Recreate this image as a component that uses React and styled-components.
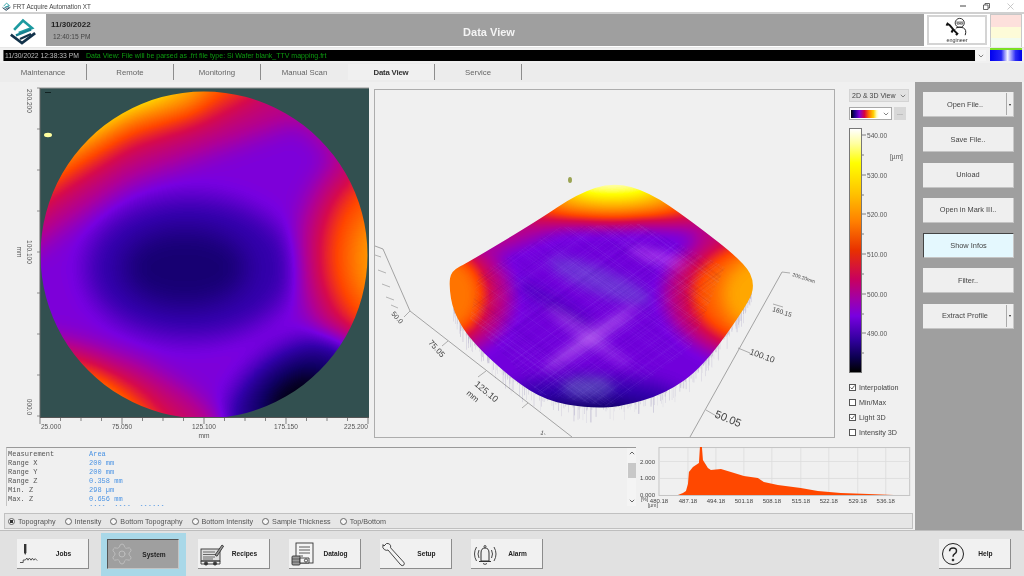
import React from 'react'
import styled, { createGlobalStyle } from 'styled-components'
import { Settings } from 'lucide-react'

const GlobalStyle = createGlobalStyle`
    html, body { margin: 0; padding: 0; background: #f0f0f0; }
    * { box-sizing: border-box; }
`;

const UI_FONT = `"Liberation Sans", Arial, sans-serif`;
const COLORMAP = "0 .06 .2 .47 .69 .84 1 1 1 1 1|0 0 0 0 0 .04 .27 .51 .75 1 1|0 .39 .67 .88 .59 .3 0 0 0 0 1";

const Page = styled.div`
    width: 1024px;
    height: 576px;
    overflow: hidden;
    display: flex;
    flex-direction: column;
    background: #f0f0f0;
    font-family: ${UI_FONT};
    color: #333;
    filter: blur(0.45px);
`;

const TitleBar = styled.div`
    height: 12px;
    background: #fff;
    display: flex;
    align-items: center;
    padding: 0 6px 0 2px;
    gap: 2px;
    font-size: 6.3px;
    color: #444;
`;

const TitleText = styled.span`
    flex: 1;
`;

const WindowControls = styled.div`
    display: flex;
    align-items: center;
    gap: 17px;
    margin-right: 4px;
`;

const Header = styled.div`
    height: 36px;
    display: flex;
    background: #fff;
    border-top: 2px solid #d0d0d0;
    border-bottom: 1px solid #e8e8e8;
`;

const LogoBox = styled.div`
    width: 46px;
    display: flex;
    align-items: center;
    justify-content: center;
`;

const HeaderPanel = styled.div`
    flex: 1;
    background: #9f9f9f;
    display: flex;
    align-items: center;
    margin-bottom: 1px;
`;

const DateBlock = styled.div`
    width: 120px;
    padding-left: 5px;
    display: flex;
    flex-direction: column;
    gap: 4px;
`;

const DateText = styled.div`
    font-size: 8px;
    font-weight: 700;
    color: #222;
`;

const TimeText = styled.div`
    font-size: 6.6px;
    color: #444;
    padding-left: 2px;
`;

const ViewTitle = styled.div`
    flex: 1;
    text-align: center;
    font-size: 11px;
    font-weight: 700;
    color: #f4f4f4;
    padding: 3px 112px 0 0;
`;

const UserBox = styled.div`
    width: 60px;
    margin: 1px 3px 2px 3px;
    background: #fff;
    border: 2px solid #d4d4d4;
    display: flex;
    flex-direction: column;
    align-items: center;
    font-size: 5.4px;
    color: #333;
    line-height: 6px;
`;

const Lights = styled.div`
    width: 32px;
    margin-right: 2px;
    display: flex;
    flex-direction: column;
    border: 1px solid #c8c8c8;
    border-bottom: 0;
`;

const Light = styled.div`
    height: ${p => p.$h}px;
    background: ${p => p.$c};
`;

const StatusRow = styled.div`
    height: 15px;
    padding: 2px 2px 2px 3px;
    display: flex;
    gap: 1px;
    background: #f0f0f0;
`;

const StatusLog = styled.div`
    flex: 1;
    height: 11px;
    background: #000;
    border-left: 1px solid #666;
    display: flex;
    align-items: center;
    gap: 7px;
    padding-left: 1px;
    font-size: 6.8px;
    white-space: nowrap;
`;

const StatusStamp = styled.span`
    color: #bdbdbd;
`;

const StatusMessage = styled.span`
    color: #0c9a10;
    font-size: 7px;
`;

const StatusDrop = styled.div`
    width: 10px;
    height: 11px;
    background: #f4f4f4;
    display: flex;
    align-items: center;
    justify-content: center;
`;

const StatusEnd = styled.div`
    width: 32px;
    height: 13px;
    margin: -2px 0 0 3px;
    border-top: 2px solid #7ce024;
    background: linear-gradient(90deg, #0000f0 0%, #2424f4 35%, #f4f4ff 55%, #2a2af4 80%, #0000e8 100%);
`;

const TabRow = styled.div`
    height: 19px;
    padding-top: 1px;
    display: flex;
    background: #ececec;
`;

const Tab = styled.div`
    width: 87px;
    display: flex;
    align-items: center;
    justify-content: center;
    font-size: 7.8px;
    font-weight: ${p => (p.$active ? 700 : 400)};
    color: ${p => (p.$active ? '#333' : '#666')};
    background: ${p => (p.$active ? '#f0f0f0' : 'transparent')};
    border-right: ${p => (p.$plain ? '0' : '1px solid #8d8d8d')};
    margin-bottom: 2px;
    letter-spacing: ${p => (p.$active ? '-0.2px' : '0')};
`;

const Main = styled.div`
    height: 448px;
    display: flex;
`;

const Content = styled.div`
    width: 915px;
    display: flex;
    flex-direction: column;
`;

const ViewerRow = styled.div`
    height: 360px;
    display: flex;
`;

const WaferPlot = styled.svg`
    width: 372px;
    height: 360px;
    flex: none;
    display: block;
`;

const SurfaceBox = styled.div`
    width: 461px;
    height: 349px;
    margin: 7px 0 0 2px;
    border: 1px solid #adadad;
    background: #f0f0f0;
    overflow: hidden;
    flex: none;
`;

const Surface = styled.svg`
    display: block;
    width: 459px;
    height: 347px;
`;

const Controls = styled.div`
    width: 60px;
    margin: 7px 0 0 14px;
    display: flex;
    flex-direction: column;
`;

const ViewSelect = styled.div`
    width: 60px;
    height: 13px;
    background: #e2e2e2;
    border: 1px solid #d4d4d4;
    font-size: 7px;
    color: #444;
    display: flex;
    align-items: center;
    justify-content: space-between;
    padding: 0 2px;
`;

const MapRow = styled.div`
    margin-top: 5px;
    display: flex;
    gap: 2px;
`;

const MapSelect = styled.div`
    width: 43px;
    height: 13px;
    background: #fff;
    border: 1px solid #a8a8a8;
    display: flex;
    align-items: center;
    padding: 0 2px 0 1px;
    justify-content: space-between;
`;

const MapSwatch = styled.div`
    width: 28px;
    height: 8px;
    background: linear-gradient(90deg, #000 0%, #140080 12%, #8000d8 30%, #d80040 48%, #ff7000 64%, #ffd000 80%, #ffffc0 92%, #fff 100%);
`;

const MapMore = styled.div`
    width: 12px;
    height: 13px;
    background: #d8d8d8;
    color: #777;
    font-size: 7px;
    text-align: center;
    line-height: 11px;
`;

const ScaleRow = styled.div`
    margin-top: 8px;
    height: 245px;
    display: flex;
`;

const ColorBar = styled.div`
    width: 13px;
    height: 245px;
    border: 1px solid #777;
    background: linear-gradient(180deg, #fff 0%, #ffffa0 6%, #ffff00 14%, #ffc000 27%, #ff8000 38%, #e83000 50%, #c80060 62%, #a000a8 70%, #7800e0 77%, #30009c 87%, #0c0050 94%, #000 100%);
`;

const ScaleTicks = styled.svg`
    width: 47px;
    height: 245px;
    display: block;
`;

const CheckList = styled.div`
    margin-top: 9px;
    display: flex;
    flex-direction: column;
    gap: 5.1px;
`;

const CheckRow = styled.div`
    height: 10px;
    display: flex;
    align-items: center;
    gap: 3px;
    font-size: 7.2px;
    color: #444;
    white-space: nowrap;
`;

const CheckBox = styled.span`
    width: 7px;
    height: 7px;
    border: 1px solid #555;
    background: #fff;
    display: flex;
    align-items: center;
    justify-content: center;
`;

const InfoRow = styled.div`
    height: 70px;
    padding: 5px 0 0 6px;
    display: flex;
`;

const InfoPanel = styled.div`
    width: 631px;
    height: 59px;
    border-top: 1px solid #999;
    border-left: 1px solid #c4c4c4;
    display: flex;
    overflow: hidden;
`;

const InfoLines = styled.div`
    flex: 1;
    padding: 2px 0 0 1px;
    font-family: "Liberation Mono", monospace;
    font-size: 7px;
    line-height: 9px;
    overflow: hidden;
`;

const InfoLine = styled.div`
    display: flex;
    white-space: pre;
    height: 9px;
`;

const InfoKey = styled.span`
    width: 81px;
    color: #555;
`;

const InfoValue = styled.span`
    color: #4c94e4;
`;

const ScrollBar = styled.div`
    width: 9px;
    display: flex;
    flex-direction: column;
    align-items: center;
    padding: 3px 0;
    background: #f4f4f4;
`;

const ScrollThumb = styled.div`
    width: 8px;
    height: 15px;
    background: #c8c8c8;
    margin: 8px 0 auto;
`;

const Histogram = styled.svg`
    width: 277px;
    height: 62px;
    margin-left: 2px;
    display: block;
`;

const RadioBar = styled.div`
    height: 16px;
    margin: 1px 2px 0 4px;
    background: #e6e6e6;
    border: 1px solid #c0c0c0;
    display: flex;
    align-items: center;
    gap: 9px;
    padding-left: 3px;
    font-size: 7.2px;
    color: #555;
`;

const RadioItem = styled.label`
    display: flex;
    align-items: center;
    gap: 3px;
    white-space: nowrap;
`;

const RadioDot = styled.span`
    width: 7px;
    height: 7px;
    border-radius: 50%;
    border: 1px solid #666;
    background: ${p => (p.$on ? 'radial-gradient(circle, #333 0 45%, #f4f4f4 55%)' : '#f8f8f8')};
`;

const Sidebar = styled.div`
    width: 107px;
    height: 448px;
    background: #9f9f9f;
    padding: 10px 0 0 8px;
    display: flex;
    flex-direction: column;
    gap: 10.3px;
`;

const SideButton = styled.div`
    width: 91px;
    height: 25px;
    flex: none;
    display: flex;
    align-items: center;
    justify-content: center;
    font-size: 7.4px;
    color: #444;
    background: ${p => (p.$active ? '#e4f8fe' : '#efefef')};
    border-right: 1px solid #c8c8c8;
    border-bottom: 1px solid #c4c4c4;
    border-top: ${p => (p.$active ? '1px solid #444' : '0')};
    border-left: ${p => (p.$active ? '1px solid #444' : '0')};
    position: relative;
    padding-right: ${p => (p.$split ? '6px' : '0')};
`;

const SplitArrow = styled.span`
    position: absolute;
    right: 0;
    top: 1px;
    bottom: 1px;
    width: 7px;
    border-left: 1px solid #aaa;
    display: flex;
    align-items: center;
    justify-content: center;
    &::after {
        content: '';
        border: 1.6px solid transparent;
        border-top: 2px solid #222;
        margin-top: 2px;
    }
`;

const Nav = styled.div`
    flex: 1;
    display: flex;
    gap: 19px;
    padding: 0 13px 0 17px;
    background: #e1e1e1;
    border-top: 1px solid #bdbdbd;
`;

const NavSlot = styled.div`
    display: flex;
    align-items: flex-start;
    padding: ${p => (p.$active ? '6px 7px 0 6px' : '8px 0 0')};
    margin: ${p => (p.$active ? '2px -7px 0' : '0')};
    background: ${p => (p.$active ? '#a9d8e8' : 'transparent')};
    margin-left: ${p => (p.$end ? 'auto' : undefined)};
`;

const NavButton = styled.div`
    width: 72px;
    height: 30px;
    display: flex;
    align-items: center;
    background: ${p => (p.$active ? '#9f9f9f' : '#f1f1f1')};
    border-right: 1px solid ${p => (p.$active ? '#c4c4c4' : '#8c8c8c')};
    border-bottom: 1px solid ${p => (p.$active ? '#c4c4c4' : '#8c8c8c')};
    border-top: ${p => (p.$active ? '1px solid #555' : '0')};
    border-left: ${p => (p.$active ? '1px solid #555' : '0')};
`;

const NavIcon = styled.svg`
    width: 26px;
    height: 26px;
    margin-left: 1px;
    flex: none;
`;

const NavLabel = styled.span`
    flex: 1;
    text-align: center;
    font-size: 6.6px;
    font-weight: 700;
    color: #222;
    padding-right: 5px;
`;

// gray value that the colormap filter turns into a height colour
const g = (v) => {
    const c = Math.round(v * 255);
    return `rgb(${c},${c},${c})`;
};

const rng = (seed) => {
    let s = seed;
    return () => {
        s = (s * 16807) % 2147483647;
        return s / 2147483647;
    };
};

const HeightFilter = ({ id, x, y, w, h, blur }) => {
    const [r, gr, b] = COLORMAP.split('|');
    return (
        <filter id={id} filterUnits="userSpaceOnUse" x={x} y={y} width={w} height={h} colorInterpolationFilters="sRGB">
            <feGaussianBlur stdDeviation={blur} />
            <feComponentTransfer>
                <feFuncR type="table" tableValues={r} />
                <feFuncG type="table" tableValues={gr} />
                <feFuncB type="table" tableValues={b} />
            </feComponentTransfer>
        </filter>
    );
};

const LABEL = { fontFamily: UI_FONT, fill: '#555' };

const WaferMap = () => {
    const bottomTicks = [40, 60.5, 81, 101.5, 122, 142.5, 163, 183.5, 204, 224.5, 245, 265.5, 286, 306.5, 327, 347.5, 368];
    const sideTicks = [88, 129, 170, 211, 252, 293, 334, 375, 416];
    return (
        <WaferPlot viewBox="0 82 372 360">
            <defs>
                <HeightFilter id="waferField" x={-40} y={20} w={480} h={480} blur={13} />
                <clipPath id="waferClip"><path d="M204 91.5a163.5 163.5 0 1 1-.01 0z" /></clipPath>
                <clipPath id="plotClip"><rect x="40" y="88" width="329" height="329" /></clipPath>
            </defs>
            <rect x="40" y="88" width="329" height="329" fill="#325050" />
            <g clipPath="url(#plotClip)">
                <g clipPath="url(#waferClip)">
                    <g filter="url(#waferField)">
                        <rect x="-40" y="20" width="480" height="480" fill={g(.31)} />
                        <ellipse cx="190" cy="268" rx="105" ry="72" fill={g(.2)} />
                        <ellipse cx="185" cy="268" rx="62" ry="38" fill={g(.12)} />
                        <path d="M0 275L60 228 130 180 240 140 300 118 330 60 0 40z" fill={g(.44)} />
                        <path d="M300 118L350 170 380 215 420 200 400 60 320 60z" fill={g(.44)} />
                        <path d="M0 235L60 190 130 145 200 122 260 90 260 40 0 40z" fill={g(.6)} />
                        <path d="M0 200L70 155 130 120 190 104 225 70 0 40z" fill={g(.8)} />
                        <path d="M0 178L70 132 125 102 160 90 170 60 0 40z" fill={g(1)} />
                        <ellipse cx="400" cy="255" rx="100" ry="120" fill={g(.46)} />
                        <ellipse cx="390" cy="255" rx="65" ry="85" fill={g(.62)} />
                        <ellipse cx="390" cy="258" rx="36" ry="50" fill={g(.75)} />
                        <path d="M30 335L80 345 140 365 190 395 235 440 0 460z" fill={g(.46)} />
                        <path d="M30 350L90 365 140 395 180 440 0 460z" fill={g(.62)} />
                        <path d="M50 385L100 390 150 440 40 460z" fill={g(.84)} />
                        <ellipse cx="295" cy="395" rx="75" ry="46" transform="rotate(-35 295 395)" fill={g(.14)} />
                        <ellipse cx="298" cy="398" rx="38" ry="24" transform="rotate(-35 298 398)" fill={g(.01)} />
                    </g>
                </g>
            </g>
            <g fill="#ffffa0">
                <ellipse cx="48" cy="135" rx="4" ry="2.2" />
            </g>
            <rect x="45" y="92" width="6" height="1" fill="#122" />
            <line x1="40" y1="88" x2="369" y2="88" stroke="#999" />
            <line x1="40" y1="88" x2="40" y2="418" stroke="#666" />
            <line x1="40" y1="417.5" x2="369" y2="417.5" stroke="#555" />
            {bottomTicks.map((x, i) => (
                <line key={x} x1={x} x2={x} y1="418" y2={i % 4 === 0 ? 424 : 421} stroke="#555" strokeWidth=".7" />
            ))}
            {sideTicks.map((y) => (
                <line key={y} x1="37" x2="40" y1={y} y2={y} stroke="#666" strokeWidth=".7" />
            ))}
            <g {...LABEL} fontSize="6.6" textAnchor="middle">
                <text x="51" y="429">25.000</text>
                <text x="122" y="429">75.050</text>
                <text x="204" y="429">125.100</text>
                <text x="286" y="429">175.150</text>
                <text x="356" y="429">225.200</text>
                <text x="204" y="438">mm</text>
                <text transform="translate(27 101) rotate(90)">200.200</text>
                <text transform="translate(27 252) rotate(90)">100.100</text>
                <text transform="translate(27 407) rotate(90)">000.0</text>
                <text transform="translate(17 252) rotate(90)">mm</text>
            </g>
        </WaferPlot>
    );
};

const OUTLINE = [[449, 287], [451, 272], [467, 264], [537, 222], [577, 195], [613, 183], [649, 193], [690, 221], [745, 264], [755, 285], [748, 305], [703, 368], [665, 395], [620, 408], [587, 409], [547, 402], [513, 381], [470, 341], [453, 312]];

// rounded closed path through the midpoints of the outline
const smoothPath = (pts) => {
    const mid = (a, b) => [(a[0] + b[0]) / 2, (a[1] + b[1]) / 2];
    const start = mid(pts[pts.length - 1], pts[0]);
    let d = `M${start[0]} ${start[1]}`;
    pts.forEach((p, i) => {
        const m = mid(p, pts[(i + 1) % pts.length]);
        d += `Q${p[0]} ${p[1]} ${m[0]} ${m[1]}`;
    });
    return d + 'Z';
};

const OUTLINE_D = smoothPath(OUTLINE);
const LOWER_EDGE = [[752, 290], [747, 303], [703, 367], [663, 393], [620, 406], [587, 407], [547, 400], [513, 380], [470, 340], [453, 310]];

const makeSpikes = () => {
    const rand = rng(4711);
    const out = [];
    for (let s = 0; s < LOWER_EDGE.length - 1; s++) {
        const [ax, ay] = LOWER_EDGE[s];
        const [bx, by] = LOWER_EDGE[s + 1];
        const n = Math.round(Math.hypot(bx - ax, by - ay) * 1.2);
        for (let i = 0; i < n; i++) {
            const t = i / n;
            const x = ax + (bx - ax) * t;
            const y = ay + (by - ay) * t;
            const r = rand();
            out.push({ x, y: y - 2, len: 2 + r * r * r * 18, o: 0.12 + rand() * 0.4 });
        }
    }
    return out;
};

const makeHatch = () => {
    const rand = rng(99);
    const out = [];
    for (let set = 0; set < 2; set++) {
        const dy = set === 0 ? -0.72 : 0.72;
        for (let i = -170; i < 170; i++) {
            const cy = 310 + i * 1.2;
            out.push({
                x1: 380, y1: cy - 220 * dy,
                x2: 820, y2: cy + 220 * dy,
                o: rand() * rand() * 0.3,
                c: rand() > 0.7 ? '#2a0a90' : '#b8b0ff',
            });
        }
    }
    return out;
};

const SPIKES = makeSpikes();
const HATCH = makeHatch();

const SurfaceView = () => (
    <Surface viewBox="375 91 459 347">
        <defs>
            <HeightFilter id="surfaceField" x={340} y={100} w={500} h={360} blur={9} />
            <clipPath id="surfaceClip"><path d={OUTLINE_D} /></clipPath>
            <clipPath id="hatchClip"><path d="M478 275L560 228 640 225 725 268 690 350 610 408 540 395 470 320z" /></clipPath>
            <filter id="soft"><feGaussianBlur stdDeviation="6" /></filter>
        </defs>
        <g stroke="#9a9a9a" strokeWidth=".9" fill="none">
            <path d="M375 247L383 250 410 312 572 438" />
            <path d="M782 273L690 438" />
            <path d="M782 273L790 274M773 305L783 308M738 349L750 354M706 411L718 418M410 312L404 318M448 342L442 347M486 372L478 378M528 404L522 409" strokeWidth=".8" />
            <path d="M375 256L381 258M378 271L386 274M382 285L390 288M386 298L394 301M391 306L398 309" strokeWidth=".7" />
        </g>
        <g fill="#7f8b20" opacity=".75"><ellipse cx="570" cy="181" rx="2" ry="3" /></g>
        <g stroke="#3a2a80" strokeWidth=".35">
            {SPIKES.map((s, i) => (
                <line key={i} x1={s.x} y1={s.y} x2={s.x} y2={s.y + s.len} opacity={s.o} />
            ))}
        </g>
        <g clipPath="url(#surfaceClip)">
            <g filter="url(#surfaceField)">
                <rect x="340" y="100" width="500" height="360" fill={g(.29)} />
                <path d="M490 255L560 228 620 220 690 232 770 295 800 150 440 150z" fill={g(.43)} />
                <ellipse cx="612" cy="195" rx="115" ry="30" fill={g(.6)} />
                <ellipse cx="612" cy="187" rx="80" ry="28" fill={g(.78)} />
                <ellipse cx="612" cy="180" rx="52" ry="18" fill={g(.98)} />
                <ellipse cx="437" cy="298" rx="74" ry="60" fill={g(.44)} />
                <ellipse cx="437" cy="296" rx="48" ry="46" fill={g(.68)} />
                <ellipse cx="775" cy="295" rx="110" ry="70" fill={g(.45)} />
                <ellipse cx="775" cy="295" rx="84" ry="56" fill={g(.64)} />
                <ellipse cx="775" cy="295" rx="54" ry="42" fill={g(.76)} />
                <ellipse cx="590" cy="402" rx="95" ry="24" fill={g(.2)} />
                <ellipse cx="590" cy="418" rx="70" ry="14" fill={g(.08)} />
            </g>
            <g filter="url(#soft)">
                <ellipse cx="600" cy="282" rx="55" ry="13" transform="rotate(22 600 282)" fill="#6a70d0" opacity=".45" />
                <ellipse cx="555" cy="305" rx="45" ry="7" transform="rotate(30 555 305)" fill="#2400a0" opacity=".4" />
                <ellipse cx="590" cy="340" rx="55" ry="6" transform="rotate(-34 590 340)" fill="#f0b0ff" opacity=".45" />
                <ellipse cx="590" cy="340" rx="50" ry="5" transform="rotate(34 590 340)" fill="#e8a0ff" opacity=".3" />
                <ellipse cx="657" cy="258" rx="30" ry="5" transform="rotate(16 657 258)" fill="#f080ff" opacity=".5" />
                <ellipse cx="588" cy="388" rx="26" ry="11" fill="#7a80c8" opacity=".5" />
            </g>
            <g clipPath="url(#hatchClip)" strokeWidth=".4">
                {HATCH.map((l, i) => (
                    <line key={i} x1={l.x1} y1={l.y1} x2={l.x2} y2={l.y2} stroke={l.c} opacity={l.o} />
                ))}
            </g>
        </g>
        <g fontFamily={UI_FONT} fill="#444">
            <text transform="translate(391 315) rotate(48)" fontSize="7">50.0</text>
            <text transform="translate(428 344) rotate(48)" fontSize="8">75.05</text>
            <text transform="translate(474 386) rotate(40)" fontSize="9">125.10</text>
            <text transform="translate(466 395) rotate(40)" fontSize="8">mm</text>
            <text transform="translate(540 435) rotate(20)" fontSize="6">1-</text>
            <text transform="translate(792 277) rotate(18)" fontSize="5">200.20mm</text>
            <text transform="translate(772 312) rotate(18)" fontSize="6.5">160.15</text>
            <text transform="translate(749 355) rotate(20)" fontSize="8.5">100.10</text>
            <text transform="translate(714 418) rotate(22)" fontSize="11">50.05</text>
        </g>
    </Surface>
);

const HIST_POINTS = '679,495 684,493 687,491 689,484 690,472 694,467 700,463 701,447 703,447 704,460 709,468 712,470 722,469 732,472 745,476 759,478 765,482 779,485 802,488 819,491 842,493 870,494 895,495';
const HIST_X = [[660, '480.18'], [689, '487.18'], [717, '494.18'], [745, '501.18'], [773, '508.18'], [802, '515.18'], [830, '522.18'], [859, '529.18'], [887, '536.18']];

const HistogramChart = () => (
    <Histogram viewBox="639 447 277 62">
        <rect x="660" y="447.5" width="251" height="48" fill="#f0f0f0" stroke="#c4c4c4" />
        {HIST_X.slice(1).map(([x]) => (
            <line key={x} x1={x} x2={x} y1="448" y2="495" stroke="#dcdcdc" strokeWidth=".8" />
        ))}
        <line x1="660" x2="911" y1="461.5" y2="461.5" stroke="#dcdcdc" strokeWidth=".8" />
        <line x1="660" x2="911" y1="478.5" y2="478.5" stroke="#dcdcdc" strokeWidth=".8" />
        <polygon points={HIST_POINTS} fill="#ff4800" />
        <g {...LABEL} fontSize="6" fill="#444">
            <text x="656" y="463.5" textAnchor="end">2.000</text>
            <text x="656" y="480.5" textAnchor="end">1.000</text>
            <text x="656" y="497.5" textAnchor="end">0.000</text>
            {HIST_X.map(([x, t]) => (
                <text key={t} x={x} y="503.5" textAnchor="middle">{t}</text>
            ))}
            <text x="642" y="501.5" fontSize="5">[%]</text>
            <text x="649" y="507" fontSize="5">[µm]</text>
        </g>
    </Histogram>
);

const ScaleColumn = () => {
    const labels = ['540.00', '530.00', '520.00', '510.00', '500.00', '490.00'];
    const ys = [7, 47, 86, 126, 166, 205];
    const minor = [27, 67, 106, 146, 186, 225];
    return (
        <ScaleTicks viewBox="0 0 47 245">
            {ys.map((y) => <line key={y} x1="0" x2="4" y1={y} y2={y} stroke="#666" strokeWidth=".8" />)}
            {minor.map((y) => <line key={y} x1="0" x2="2" y1={y} y2={y} stroke="#666" strokeWidth=".8" />)}
            <g {...LABEL} fontSize="6.6">
                {ys.map((y, i) => <text key={y} x="5" y={y + 2.5}>{labels[i]}</text>)}
                <text x="28" y="31">[µm]</text>
            </g>
        </ScaleTicks>
    );
};

const Chevron = ({ color = '#777', up }) => (
    <svg width="6" height="4" viewBox="0 0 6 4">
        <path d={up ? 'M.8 3.200L3 1 5.200 3.200' : 'M.8.8L3 3 5.200.8'} fill="none" stroke={color} strokeWidth=".9" />
    </svg>
);

const Logo = ({ size = 28 }) => (
    <svg width={size} height={size} viewBox="0 0 28 28" fill="none" strokeLinecap="square">
        <path d="M6 12L14 3.500 23 11 11 15.500" stroke="#1d9aa0" strokeWidth="2.600" />
        <path d="M21 13L8 18" stroke="#168090" strokeWidth="2.300" />
        <path d="M3 18.500L13 26 25 17" stroke="#12324a" strokeWidth="2.800" />
        <path d="M21 17.500L12 21.500" stroke="#12324a" strokeWidth="2.200" />
    </svg>
);

const EngineerIcon = () => (
    <svg width="28" height="22" viewBox="0 0 28 22" fill="none">
        <circle cx="17" cy="6.500" r="5" stroke="#222" strokeWidth="1" />
        <path d="M13 5.500h8M14 6.500h2.600v1.400H14zM17.600 6.500h2.600v1.400h-2.600z" stroke="#333" strokeWidth=".7" />
        <path d="M13 12q4-2 8 0t2 8M12.500 13l-1 1" stroke="#222" strokeWidth="1.100" />
        <path d="M3 7l3 2 5 6 3 3M8 17L10 13M4 6.500L2.500 9.500M13 20l2-2.600" stroke="#111" strokeWidth="2.200" />
    </svg>
);

const navIcons = {
    Jobs: (
        <g fill="none">
            <path d="M6 3h2.400v8.500L7.200 14 6 11.500z" fill="#333" />
            <path d="M2 21.500h3.200V19h2.200l1.400-2 1.200 2.200 1.400-2.200 1.600 2.200 1.400-2 1.400 2 1.400-1.600 2 2" stroke="#444" strokeWidth=".9" />
        </g>
    ),
    System: <Settings x={1} y={1} width={24} height={24} color="#bdbdbd" strokeWidth={1} />,
    Recipes: (
        <g fill="none" stroke="#333" strokeWidth=".9">
            <rect x="2" y="8" width="19" height="12" fill="#ddd" />
            <path d="M4 11h12M4 13.500h13M4 16h12M4 18h10" strokeWidth=".7" />
            <path d="M16 14l7-10 1.600 1.200-6.600 10z" fill="#999" />
            <path d="M2 20h19v3H2z" />
            <circle cx="7" cy="22.500" r="1.600" fill="#333" />
            <circle cx="16" cy="22.500" r="1.600" fill="#333" />
        </g>
    ),
    Datalog: (
        <g fill="none" stroke="#333" strokeWidth=".9">
            <rect x="6" y="2" width="17" height="20" fill="#f4f4f4" />
            <path d="M9 6h11M9 9h11M9 12h11M9 15h4" strokeWidth=".8" />
            <rect x="2" y="15" width="8" height="9" rx="1" fill="#9a9a9a" />
            <path d="M2 18h8M2 21h8" strokeWidth=".6" />
            <path d="M10 17h9v5h-9z" fill="#f4f4f4" />
            <circle cx="16" cy="19.500" r="1.600" />
        </g>
    ),
    Setup: (
        <path d="M5.500 2.500L3 5 2 3.600q-1 3.400 1.400 5 2 1.300 3.600.4L20 24.200q2 1 3-.4.800-1.300-.3-2.600L9.600 6.800q.6-2.200-1-3.600-1.400-1-3.100-.7z" fill="#f4f4f4" stroke="#333" strokeWidth=".9" />
    ),
    Alarm: (
        <g fill="none" stroke="#333" strokeWidth=".9">
            <path d="M9 20V12q0-5 4-5t4 5v8zM7 20.500h12" strokeWidth="1" />
            <path d="M11 22.500q2 1.800 4 0" />
            <path d="M4.500 6Q.5 13 4.500 20M22 6q4 7 0 14M7 9q-2 4 0 8M19.500 9q2 4 0 8" />
            <circle cx="13" cy="5.500" r="1" />
        </g>
    ),
    Help: (
        <g fill="none" stroke="#222" strokeWidth="1">
            <circle cx="13" cy="13" r="10.500" />
            <path d="M9.600 10.200q0-3.200 3.500-3.200t3.400 3q0 1.800-1.900 2.800-1.600 1-1.600 3" strokeWidth="1.500" />
            <circle cx="13" cy="19" r=".9" fill="#222" />
        </g>
    ),
};

const NAV_ITEMS = ['Jobs', 'System', 'Recipes', 'Datalog', 'Setup', 'Alarm'];
const TABS = ['Maintenance', 'Remote', 'Monitoring', 'Manual Scan', 'Data View', 'Service'];
const INFO = [
    ['Measurement', 'Area'],
    ['Range X', '200 mm'],
    ['Range Y', '200 mm'],
    ['Range Z', '0.358 mm'],
    ['Min. Z', '298 µm'],
    ['Max. Z', '0.656 mm'],
    ['', '1111  1111  111111'],
];
const RADIOS = ['Topography', 'Intensity', 'Bottom Topography', 'Bottom Intensity', 'Sample Thickness', 'Top/Bottom'];
const SIDE_BUTTONS = [
    { label: 'Open File..', split: true },
    { label: 'Save File..' },
    { label: 'Unload' },
    { label: 'Open in Mark III..' },
    { label: 'Show Infos', active: true },
    { label: 'Filter..' },
    { label: 'Extract Profile', split: true },
];
const CHECKS = [['Interpolation', true], ['Min/Max', false], ['Light 3D', true], ['Intensity 3D', false]];

const NavEntry = ({ name, active, end }) => (
    <NavSlot $active={active} $end={end}>
        <NavButton $active={active}>
            <NavIcon viewBox="0 0 26 26">{navIcons[name]}</NavIcon>
            <NavLabel>{name}</NavLabel>
        </NavButton>
    </NavSlot>
);

const App = () => {
    return (
        <Page>
            <GlobalStyle />
            <TitleBar>
                <Logo size={9} />
                <TitleText>FRT Acquire Automation XT</TitleText>
                <WindowControls>
                    <svg width="6" height="6" viewBox="0 0 6 6"><path d="M0 3h6" stroke="#444" /></svg>
                    <svg width="7" height="7" viewBox="0 0 7 7" fill="none" stroke="#444" strokeWidth=".8"><path d="M.5 2h4.500v4.500h-4.500zM2 2V.5h4.500V5H5" /></svg>
                    <svg width="7" height="7" viewBox="0 0 7 7" stroke="#bbb" strokeWidth=".8"><path d="M.5.5l6 6M6.500.5l-6 6" /></svg>
                </WindowControls>
            </TitleBar>
            <Header>
                <LogoBox><Logo /></LogoBox>
                <HeaderPanel>
                    <DateBlock>
                        <DateText>11/30/2022</DateText>
                        <TimeText>12:40:15 PM</TimeText>
                    </DateBlock>
                    <ViewTitle>Data View</ViewTitle>
                </HeaderPanel>
                <UserBox>
                    <EngineerIcon />
                    engineer
                </UserBox>
                <Lights>
                    <Light $h={12} $c="#fde0dc" />
                    <Light $h={12} $c="#fdfbd8" />
                    <Light $h={9} $c="#f2fbf0" />
                </Lights>
            </Header>
            <StatusRow>
                <StatusLog>
                    <StatusStamp>11/30/2022 12:38:33 PM</StatusStamp>
                    <StatusMessage>Data View: File will be parsed as .frt file type: Si Wafer blank_TTV mapping.frt</StatusMessage>
                </StatusLog>
                <StatusDrop><Chevron /></StatusDrop>
                <StatusEnd />
            </StatusRow>
            <TabRow>
                {TABS.map((t, i) => (
                    <Tab key={t} $active={t === 'Data View'} $plain={i === 3}>{t}</Tab>
                ))}
            </TabRow>
            <Main>
                <Content>
                    <ViewerRow>
                        <WaferMap />
                        <SurfaceBox><SurfaceView /></SurfaceBox>
                        <Controls>
                            <ViewSelect>2D &amp; 3D View<Chevron /></ViewSelect>
                            <MapRow>
                                <MapSelect><MapSwatch /><Chevron /></MapSelect>
                                <MapMore>...</MapMore>
                            </MapRow>
                            <ScaleRow>
                                <ColorBar />
                                <ScaleColumn />
                            </ScaleRow>
                            <CheckList>
                                {CHECKS.map(([label, on]) => (
                                    <CheckRow key={label}>
                                        <CheckBox>
                                            {on && <svg width="5" height="5" viewBox="0 0 5 5"><path d="M.5 2.500l1.500 1.500 2.500-3.500" fill="none" stroke="#444" strokeWidth=".8" /></svg>}
                                        </CheckBox>
                                        {label}
                                    </CheckRow>
                                ))}
                            </CheckList>
                        </Controls>
                    </ViewerRow>
                    <InfoRow>
                        <InfoPanel>
                            <InfoLines>
                                {INFO.map(([k, v], i) => (
                                    <InfoLine key={i}><InfoKey>{k}</InfoKey><InfoValue>{v}</InfoValue></InfoLine>
                                ))}
                            </InfoLines>
                            <ScrollBar>
                                <Chevron color="#555" up />
                                <ScrollThumb />
                                <Chevron color="#555" />
                            </ScrollBar>
                        </InfoPanel>
                        <HistogramChart />
                    </InfoRow>
                    <RadioBar>
                        {RADIOS.map((r, i) => (
                            <RadioItem key={r}><RadioDot $on={i === 0} />{r}</RadioItem>
                        ))}
                    </RadioBar>
                </Content>
                <Sidebar>
                    {SIDE_BUTTONS.map((b) => (
                        <SideButton key={b.label} $active={b.active} $split={b.split}>
                            {b.label}
                            {b.split && <SplitArrow />}
                        </SideButton>
                    ))}
                </Sidebar>
            </Main>
            <Nav>
                {NAV_ITEMS.map((n) => <NavEntry key={n} name={n} active={n === 'System'} />)}
                <NavEntry name="Help" end />
            </Nav>
        </Page>
    );
};

export default App
